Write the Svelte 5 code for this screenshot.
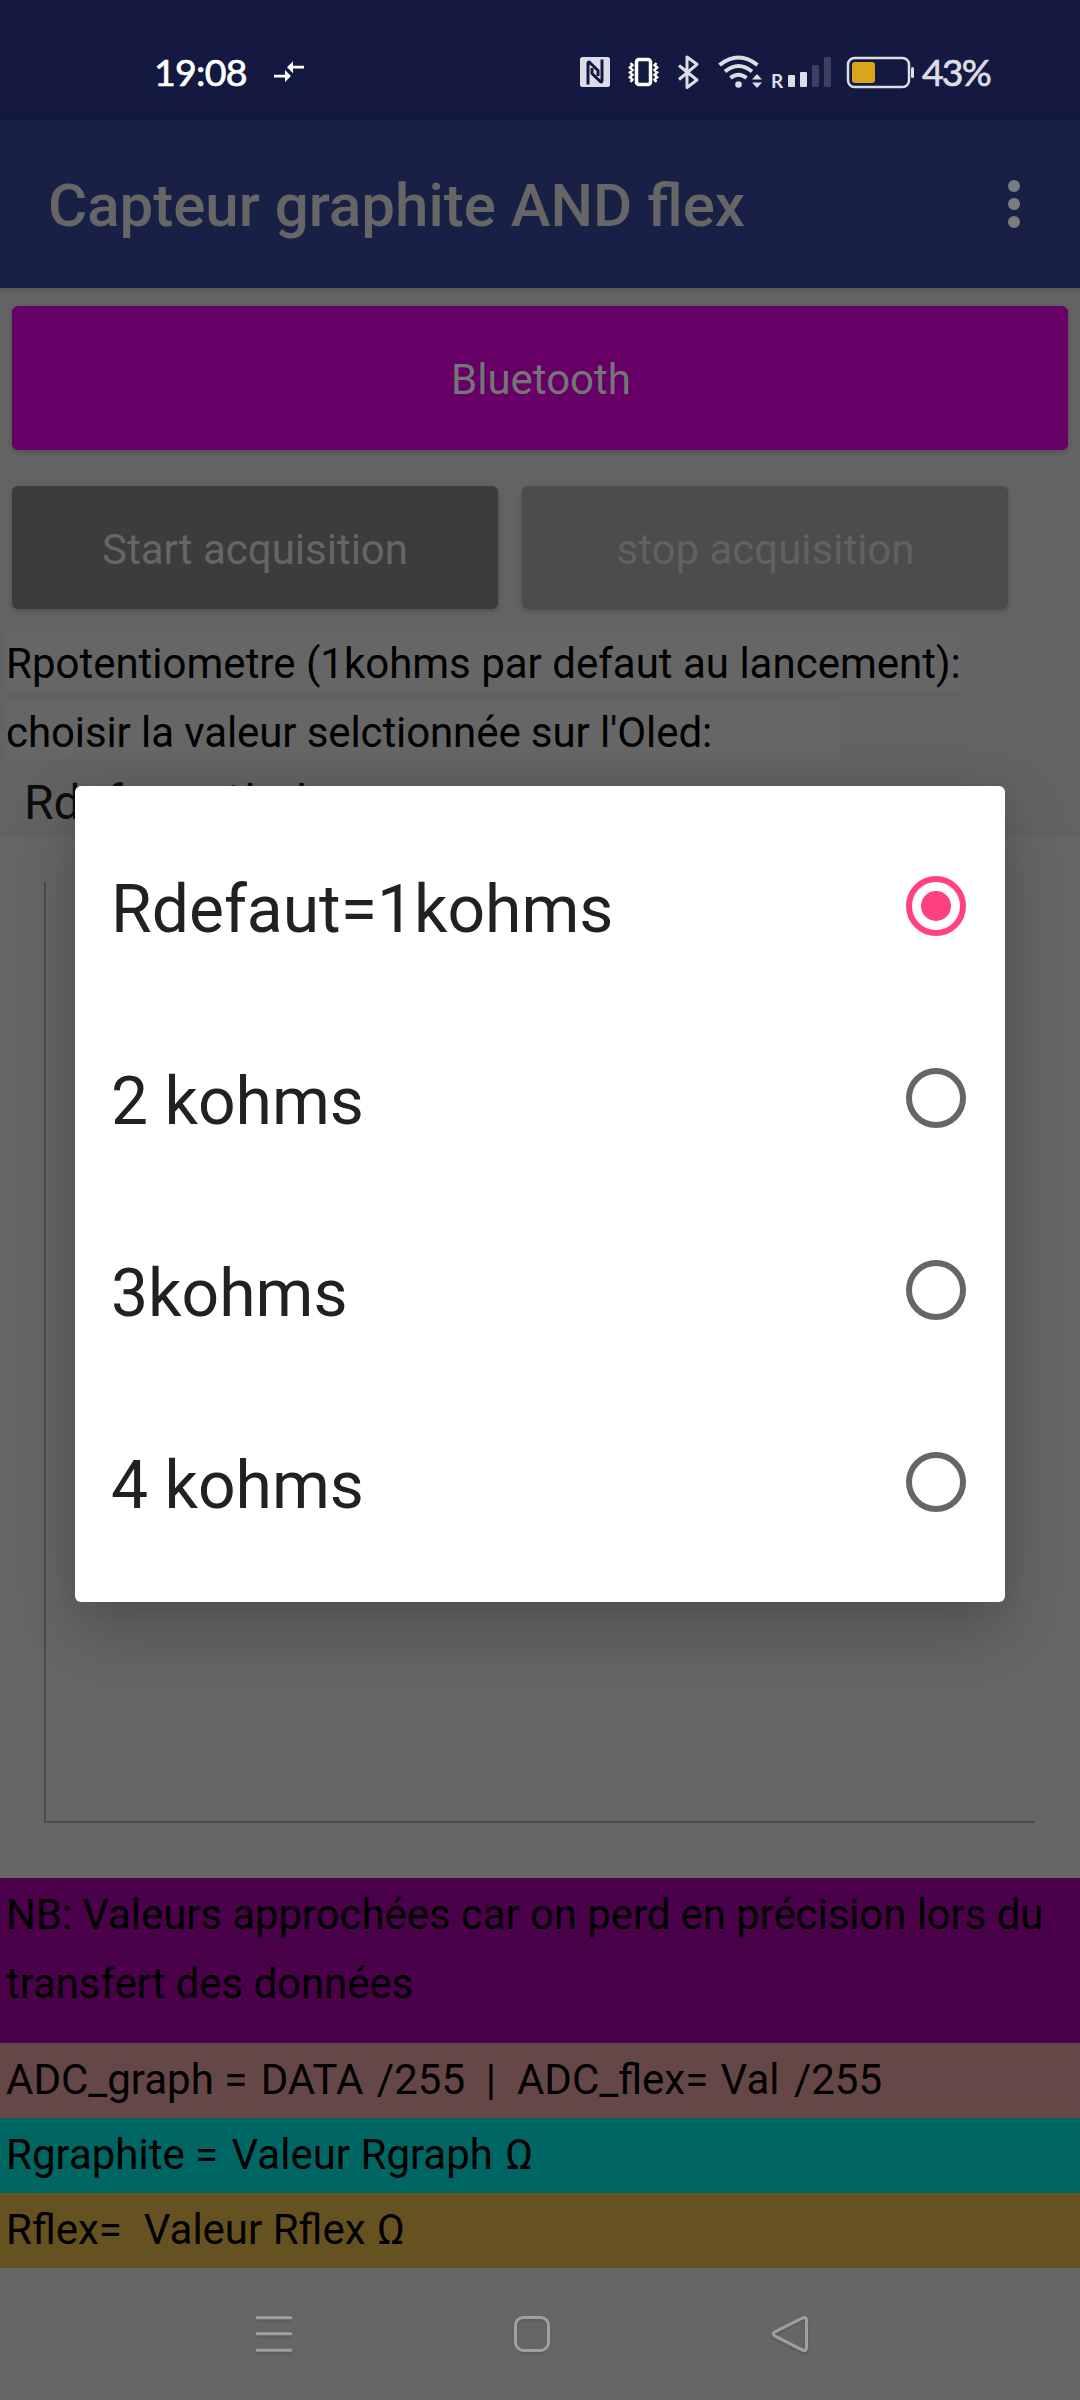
<script>
  const options = ['Rdefaut=1kohms', '2 kohms', '3kohms', '4 kohms'];
  let selected = $state(0);
</script>

<div class="screen">
  <header class="status">
    <span class="time">19:08</span>
    <svg class="transfer" viewBox="272 60 32 24" width="32" height="24">
      <path d="M273 74.7h11v-4.700l6 6-6 6v-4.500h-11zM303 65.700h-11v-4.500l-6 6 6 6v-4.700h11z" />
    </svg>
    <div class="indicators">
      <svg viewBox="580 54 30 36" width="30" height="36">
        <rect x="580" y="57" width="30" height="30" rx="2.500" />
        <path class="nfc" d="M588 84.500V63.500q0-2.500 2-.8L598 70.500V76M602 59.500V80.500q0 2.500-2 .8L592 73.500V68" />
      </svg>
      <svg class="vibrate" viewBox="627 54 33 36" width="33" height="36">
        <rect x="636.500" y="59.500" width="14" height="25" rx="2.500" />
        <path d="M630.500 63l2 2.200-2.600 2.400 2.600 2.400-2.600 2.400 2.600 2.400-2.600 2.400 2.600 2.400-2 2.200M656.500 63l-2 2.200 2.600 2.400-2.600 2.400 2.600 2.400-2.600 2.400 2.600 2.400-2.600 2.400 2 2.200" />
      </svg>
      <svg class="bluetooth" viewBox="677 54 24 36" width="24" height="36">
        <path d="M679 65.500L697 80l-10 7.500V57L697 64.300 679 79.500" />
      </svg>
      <svg class="wifi" viewBox="717 54 46 36" width="46" height="36">
        <path class="arc" d="M719.500 65q19-15 38 0M725 71.500q13.500-11 27 0M730.500 78q8-6.500 16 0" />
        <circle cx="738.500" cy="84.500" r="3.300" />
        <path d="M752 79.500l5-5.500 5 5.500zM752 82.500h10l-5 5.500z" />
      </svg>
      <span class="roaming">R</span>
      <svg class="signal" viewBox="788 54 44 36" width="44" height="36">
        <rect x="788" y="75" width="7" height="12" rx="1" />
        <rect x="800" y="72" width="7" height="15" rx="1" />
        <rect class="off" x="812" y="65" width="7" height="22" rx="1" />
        <rect class="off" x="824" y="57" width="7" height="30" rx="1" />
      </svg>
      <svg class="battery" viewBox="846 54 69 36" width="69" height="36">
        <rect class="shell" x="848" y="58" width="61" height="29" rx="6.500" />
        <rect class="charge" x="852" y="62" width="23" height="21" rx="3" />
        <rect x="911" y="67" width="3" height="11" rx="1.500" />
      </svg>
      <span class="percent">43%</span>
    </div>
  </header>

  <div class="appbar">
    <h1>Capteur graphite AND flex</h1>
    <div class="more"><i></i><i></i><i></i></div>
  </div>

  <main>
    <div class="controls">
      <button class="connect">Bluetooth</button>
      <div class="pair">
        <button class="start">Start acquisition</button>
        <button class="stop" disabled>stop acquisition</button>
      </div>
      <p class="label">Rpotentiometre (1kohms par defaut au lancement):</p>
      <p class="label second">choisir la valeur selctionnée sur l'Oled:</p>
      <div class="spinner">{options[selected]}</div>
    </div>
    <div class="chart"><div class="plot"></div></div>
    <div class="readouts">
      <p class="note">NB: Valeurs approchées car on perd en précision lors du transfert des données</p>
      <p class="adc">ADC_graph&nbsp;= <span class="wide">DATA</span> <span class="wide">/255&nbsp; |&nbsp; ADC_flex=</span> <span class="mid">Val</span> <span class="wider">/255</span></p>
      <p class="graphite">Rgraphite&nbsp;= <span class="wide">Valeur Rgraph</span> <span class="mid">Ω</span></p>
      <p class="flex">Rflex=&nbsp; <span class="slight">Valeur Rflex</span> <span class="slight">Ω</span></p>
    </div>
  </main>

  <nav>
    <svg viewBox="0 0 40 40" width="40" height="40"><path d="M2 3.700h36M2 19.800h36M2 36.200h36" /></svg>
    <svg viewBox="0 0 40 40" width="40" height="40"><rect x="3.500" y="3.500" width="33" height="33" rx="8" /></svg>
    <svg viewBox="0 0 40 40" width="40" height="40"><path d="M32.500 4L5 17.800q-3.500 2.200 0 4.400L32.500 36q4 1.500 4-2.500v-27q0-4-4-2.500z" /></svg>
  </nav>

  <div class="dialog" role="radiogroup">
    {#each options as option, i}
      <button class="option" role="radio" aria-checked={i === selected} onclick={() => (selected = i)}>
        <span>{option}</span>
        <i class="radio" class:checked={i === selected}></i>
      </button>
    {/each}
  </div>
</div>

<style>
  :global(body) { margin: 0; background: #666; }
  .screen {
    position: relative; width: 1080px; height: 2400px; overflow: hidden;
    display: flex; flex-direction: column;
    background: #666; color: #000;
    font-family: Roboto, "Liberation Sans", sans-serif; font-size: 42px;
  }
  p, h1 { margin: 0; font-weight: 400; }
  button { border: 0; margin: 0; padding: 0; font: inherit; }
  svg { display: block; flex: none; }

  .status {
    height: 120px; flex: none; box-sizing: border-box; padding: 24px 0 0 154px;
    display: flex; align-items: center; background: #131940;
    font-family: Lato, sans-serif; font-size: 37.500px; line-height: 48px;
  }
  .time { width: 119px; color: #fff; -webkit-text-stroke: .7px #fff; white-space: nowrap; letter-spacing: -.7px; }
  .transfer { fill: #fff; }
  .indicators { display: flex; align-items: center; margin-left: 275px; fill: #dcdde5; color: #dcdde5; }
  .nfc { fill: none; stroke: #131940; stroke-width: 3; stroke-linejoin: round; }
  .vibrate { margin-left: 17px; fill: none; stroke: #fff; stroke-width: 3.500; }
  .vibrate path { stroke-width: 2.500; }
  .bluetooth { margin-left: 17px; fill: none; stroke: #dcdde5; stroke-width: 3; stroke-linejoin: round; }
  .wifi { margin-left: 16px; }
  .arc { fill: none; stroke: #dcdde5; stroke-width: 4; }
  .roaming { margin-left: 8px; width: 17px; font-size: 19px; line-height: 20px; font-weight: 700; padding-top: 18px; }
  .off { fill: #3b4060; }
  .battery { margin-left: 14px; }
  .shell { fill: none; stroke: #dcdde5; stroke-width: 2.500; }
  .charge { fill: #dca418; }
  .percent { margin-left: 7px; letter-spacing: -1.9px; -webkit-text-stroke: .7px #dcdde5; white-space: nowrap; }

  .appbar {
    height: 168px; flex: none; box-sizing: border-box; padding: 0 60px 0 48px;
    display: flex; align-items: center; justify-content: space-between;
    background: #192046; color: #666; box-shadow: 0 1px 7px rgba(0, 0, 0, .2); z-index: 1;
  }
  h1 { font-size: 60px; line-height: 70px; font-weight: 500; padding-top: 4px; white-space: nowrap; }
  .more { display: grid; gap: 6px; }
  .more i { width: 12px; height: 12px; border-radius: 50%; background: #7b7c7d; }

  .controls { height: 549px; box-sizing: border-box; padding: 18px 12px 0; background: #636363; }
  .controls button { border-radius: 6px; box-shadow: 0 2px 5px rgba(0, 0, 0, .2); color: #757575; }
  .controls .connect { display: block; width: 1056px; height: 144px; background: #660066; padding: 3px 0 0 2px; }
  .pair { display: flex; gap: 24px; margin-top: 36px; }
  .pair button { width: 486px; height: 123px; padding-top: 4px; }
  .start { background: #3c3c3c; }
  .controls .start { color: #666; }
  .stop { background: #4c4c4c; }
  .controls .stop { color: #616161; padding-left: 1px; }
  .label { box-sizing: border-box; width: 954px; height: 57px; line-height: 57px; margin: 24px 0 0 -6px; padding-top: 2px; background: #666; white-space: nowrap; }
  .second { width: 834px; margin-top: 12px; letter-spacing: -.1px; }
  .spinner { margin: 12px 0 0 12px; height: 66px; line-height: 64px; font-size: 48px; color: #0d0d0d; }

  .chart { height: 1041px; box-sizing: border-box; padding: 45px 45px 55px 44px; }
  .plot { height: 941px; box-sizing: border-box; border-left: 2px solid #4c4c4c; border-bottom: 2px solid #4c4c4c; }

  .readouts p { box-sizing: border-box; height: 75px; line-height: 73px; padding-left: 6px; white-space: nowrap; }
  .readouts .note { height: 165px; line-height: 69px; padding-top: 2px; white-space: normal; background: #4b004a; letter-spacing: -.09px; }
  .wide { margin-left: 3px; }
  .wider { margin-left: 4px; }
  .mid { margin-left: 2px; }
  .slight { margin-left: 1px; }
  .adc { background: #664747; }
  .graphite { background: #006663; }
  .flex { background: #665220; }

  nav { height: 132px; display: flex; gap: 218px; padding-left: 254px; align-items: center; }
  nav svg { fill: none; stroke: #a0a0a0; stroke-width: 3; filter: drop-shadow(0 2px 1px rgba(0, 0, 0, .12)); }

  .dialog {
    position: absolute; z-index: 2; left: 75px; top: 786px; width: 930px; height: 816px;
    box-sizing: border-box; padding: 24px 39px 24px 36px; border-radius: 6px; background: #fff;
    box-shadow: 0 30px 70px rgba(0, 0, 0, .22), 0 0 24px rgba(0, 0, 0, .06);
  }
  .option {
    width: 100%; height: 192px; display: flex; align-items: center; justify-content: space-between;
    background: none; color: #212121; font-size: 66px;
  }
  .option span { padding-top: 7px; }
  .radio { box-sizing: border-box; width: 60px; height: 60px; border: 6px solid #666; border-radius: 50%; display: grid; place-items: center; }
  .checked { border-color: #ff4081; }
  .checked::after { content: ''; width: 30px; height: 30px; border-radius: 50%; background: #ff4081; }
</style>
